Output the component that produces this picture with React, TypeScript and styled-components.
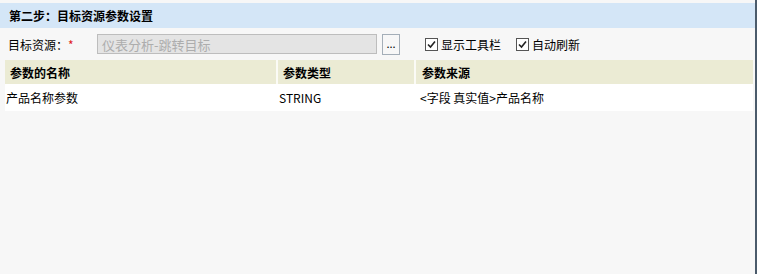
import React from "react";
import styled, { createGlobalStyle } from "styled-components";

const GlobalStyle = createGlobalStyle`
  html, body {
    margin: 0;
    padding: 0;
    background: #f7f7f7;
  }
  body {
    font-family: "Noto Sans CJK SC", "Noto Sans", sans-serif;
    font-size: 12px;
    color: #000;
  }
`;

const Page = styled.div`
  width: 757px;
  height: 274px;
  box-sizing: border-box;
  padding-top: 3px;
  border-right: 2px solid #4b5b6b;
  background: #f7f7f7;
  display: flex;
  flex-direction: column;
  overflow: hidden;
`;

const TitleBar = styled.div`
  height: 25px;
  display: flex;
  align-items: center;
  padding-left: 9px;
  background: #d4e6f7;
  font-weight: bold;
  font-size: 12px;
`;

const FormRow = styled.div`
  height: 32px;
  display: flex;
  align-items: center;
  padding-left: 8px;
`;

const Label = styled.span`
  width: 89px;
  white-space: nowrap;
`;

const Required = styled.span`
  color: #e02020;
`;

const TextBox = styled.div`
  width: 280px;
  height: 20px;
  box-sizing: border-box;
  border: 1px solid #bdbdbd;
  background: #e4e4e4;
  color: #adadad;
  display: flex;
  align-items: center;
  padding-left: 4px;
  font-size: 13px;
`;

const BrowseButton = styled.div`
  width: 18px;
  height: 21px;
  margin-left: 5px;
  box-sizing: border-box;
  border: 1px solid #a4aeb8;
  background: #f7f7f7;
  display: flex;
  align-items: flex-end;
  justify-content: center;
  padding-bottom: 5px;
  font-size: 11px;
  line-height: 1;
`;

const Check = styled.label<{ $gap: number }>`
  display: flex;
  align-items: center;
  margin-left: ${(p) => p.$gap}px;
  font-size: 12px;
`;

const Box = styled.span`
  width: 11px;
  height: 11px;
  border: 1px solid #555;
  background: #fff;
  margin-right: 3px;
  display: flex;
  align-items: center;
  justify-content: center;
`;

const Table = styled.div`
  margin-left: 5px;
  width: 748px;
  display: flex;
  flex-direction: column;
`;

const HeadRow = styled.div`
  display: grid;
  grid-template-columns: 271px 136px 337px;
  column-gap: 2px;
  height: 24px;
  background: #fbfbf6;
`;

const HeadCell = styled.div<{ $pad: number }>`
  background: #ebebd4;
  font-weight: bold;
  display: flex;
  align-items: center;
  padding-left: ${(p) => p.$pad}px;
`;

const DataRow = styled.div`
  display: grid;
  grid-template-columns: 273px 138px 1fr;
  height: 27px;
  background: #fff;
`;

const DataCell = styled.div<{ $pad: number }>`
  display: flex;
  align-items: center;
  padding-left: ${(p) => p.$pad}px;
`;

const Tick = () => (
  <svg width="9" height="9" viewBox="0 0 9 9">
    <path d="M1 4.5 L3.5 7 L8 1.5" fill="none" stroke="#222" strokeWidth="1.6" />
  </svg>
);

export default function App() {
  return (
    <>
      <GlobalStyle />
      <Page>
        <TitleBar>第二步：目标资源参数设置</TitleBar>
        <FormRow>
          <Label>
            目标资源：<Required>*</Required>
          </Label>
          <TextBox>仪表分析-跳转目标</TextBox>
          <BrowseButton>...</BrowseButton>
          <Check $gap={25}>
            <Box>
              <Tick />
            </Box>
            显示工具栏
          </Check>
          <Check $gap={15}>
            <Box>
              <Tick />
            </Box>
            自动刷新
          </Check>
        </FormRow>
        <Table>
          <HeadRow>
            <HeadCell $pad={5}>参数的名称</HeadCell>
            <HeadCell $pad={5}>参数类型</HeadCell>
            <HeadCell $pad={6}>参数来源</HeadCell>
          </HeadRow>
          <DataRow>
            <DataCell $pad={1}>产品名称参数</DataCell>
            <DataCell $pad={1}>STRING</DataCell>
            <DataCell $pad={4}>&lt;字段 真实值&gt;产品名称</DataCell>
          </DataRow>
        </Table>
      </Page>
    </>
  );
}
